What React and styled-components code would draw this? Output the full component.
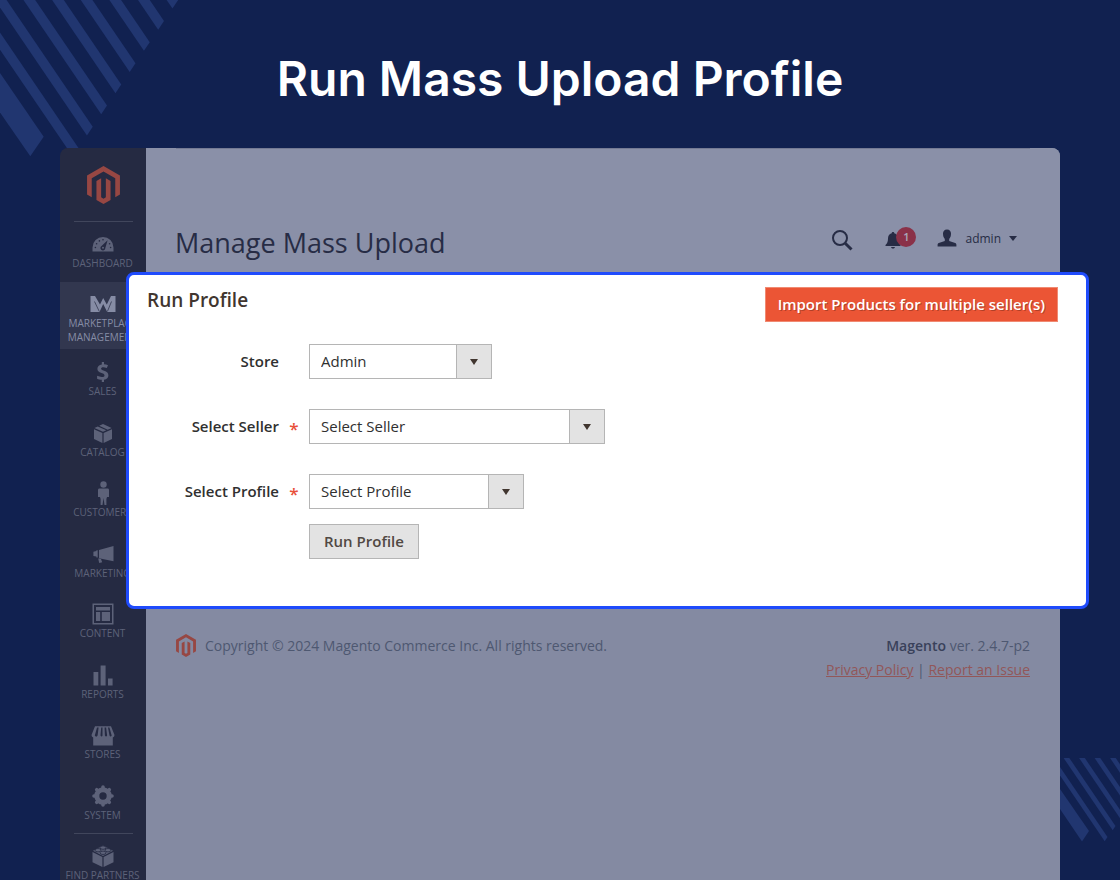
import React, { useState } from "react";
import styled, { createGlobalStyle, css } from "styled-components";

const COLOR = {
  NAVY: "#112150",
  STRIPE: "#213670",
  SIDEBAR: "#252a42",
  SIDEBAR_ACTIVE: "#32374f",
  SIDEBAR_TEXT: "#5d6279",
  SIDEBAR_LIGHT: "#868ca5",
  HEADER: "#8a90a8",
  HEADER_LINE: "#747a94",
  FOOTER: "#848aa2",
  INK: "#272c45",
  FOOT_TEXT: "#4e5871",
  LINK: "#925759",
  LOGO: "#974743",
  BLUE: "#1f4bfc",
  ORANGE: "#eb5535",
  TEXT: "#303030",
  GRAY: "#e3e3e3",
  LINE: "#b5b5b5",
};

const stripes = [-1, 0, 1, 2, 3, 4, 5, 6];

const TopStripes = () => (
  <TopPattern width="180" height="160" viewBox="0 0 180 160" fill={COLOR.STRIPE} aria-hidden="true">
    {stripes.map((i) => {
      const x = 164 - 14.25 * i;
      const y = 21 + 21.15 * i;
      return <polygon key={i} points={`${x},${y} ${x - 5.8},${y + 8.7} ${x - 141.8},${y - 191.3} ${x - 136},${y - 200}`} />;
    })}
    <polygon points="0,73 43.7,136.7 30.3,156.3 0,112.5" />
  </TopPattern>
);

const BottomStripes = () => (
  <BottomPattern width="60" height="84" viewBox="0 0 60 84" fill={COLOR.STRIPE} aria-hidden="true">
    {[0, 1, 2, 3, 4].map((i) => {
      const x = 47.5 + 8 * i;
      const y = 79 - 11 * i;
      return <polygon key={i} points={`${x},${y} ${x - 2.8},${y + 4.2} ${x - 87.8},${y - 120.8} ${x - 82},${y - 120.8}`} />;
    })}
    <polygon points="0,31 29,73 22,83.5 0,51" />
  </BottomPattern>
);

const MagentoLogo = ({ width, height }) => (
  <svg width={width} height={height} viewBox="1.6 0 20.8 24" fill={COLOR.LOGO} aria-hidden="true">
    <path d="M12 24l-4.455-2.572v-12l2.97-1.715v12.001l1.485.902 1.485-.902V7.713l2.971 1.715v12L12 24zM22.391 6v12l-2.969 1.714V7.713L12 3.43 4.574 7.713v12.001L1.609 18V6L12 0l10.391 6z" />
  </svg>
);

const Icon = ({ children, w = 24, h = 24 }) => (
  <svg width={w} height={h} viewBox={`0 0 ${w} ${h}`} fill="currentColor" aria-hidden="true">
    {children}
  </svg>
);

const icons = {
  dashboard: (
    <Icon>
      <path d="M1.5 19.5v-4a10.5 10.5 0 0 1 21 0v4z" />
      <g fill={COLOR.SIDEBAR}>
        <circle cx="4.4" cy="15.5" r=".8" />
        <circle cx="5.6" cy="11.7" r=".8" />
        <circle cx="8.4" cy="8.9" r=".8" />
        <circle cx="12" cy="7.8" r=".8" />
        <circle cx="18.6" cy="11.7" r=".8" />
        <circle cx="19.6" cy="15.5" r=".8" />
        <path d="M16.6 8.2l-2.2 7.6a2.5 2.5 0 1 1-3.6-2.1z" />
      </g>
      <circle cx="12" cy="15.8" r="1" />
    </Icon>
  ),
  market: (
    <Icon w={26}>
      <path d="M.5 4H5l5 8.500L13.200 6l3.600 6.500L21 4h4.500v16h-8.300L13.200 12 9.500 20H.5z" />
      <path d="M4.500 9.500L9.300 19.500M21.500 9.500L17.400 19.500" stroke={COLOR.SIDEBAR_ACTIVE} strokeWidth=".8" />
    </Icon>
  ),
  sales: (
    <Icon>
      <path d="M10.8 2h2.2v2.2c1.5.1 2.8.5 4 1.1l-1.2 2.8c-1.3-.6-2.5-.9-3.5-.9-1.5 0-2.2.6-2.2 1.4 0 1 .9 1.4 3 2.2 2.9 1 4.3 2.3 4.3 4.6 0 2.2-1.6 3.9-4.4 4.3V22h-2.2v-2.2c-1.9 0-3.5-.4-4.7-1v-3c1.5.7 3.2 1.2 4.7 1.2 1.8 0 2.7-.6 2.7-1.6s-.8-1.5-3-2.300c-2.900-1-4.100-2.400-4.100-4.400 0-2.300 1.600-3.900 4.400-4.300z" />
    </Icon>
  ),
  catalog: (
    <Icon>
      <path d="M3 8.300l8.400 3.700v10L3 18.100zM21 8.300L12.600 12v10l8.400-3.900z" />
      <path d="M3.400 7.100l3.400-1.600 8.500 3.700-3.300 1.600zM8.200 4.800L12 3l8.600 4.100-3.900 1.600z" />
    </Icon>
  ),
  customers: (
    <Icon>
      <ellipse cx="12.5" cy="3.5" rx="3.200" ry="3.300" />
      <path d="M8.500 7.500h8c1 0 1.500.6 1.500 1.500V16h-2l-.6 2v6h-1.900l-1-7-1 7H9.600v-6L9 16H7V9c0-.9.500-1.500 1.500-1.500z" />
    </Icon>
  ),
  marketing: (
    <Icon>
      <path d="M22.500 4v15.200L8 16.300V8zM6.700 8.300v7.300H5.400v-1.200l-3-.5V9.700l3-.6v-.8zM7.200 16.500l2.800.6 1.200 3.200-3 .8z" />
    </Icon>
  ),
  content: (
    <Icon>
      <path d="M1.500 1.500h21v21h-21zM3 3v18h18V3z" fillRule="evenodd" />
      <path d="M5 5h14v3.500H5zM5 10h4.200v9H5zM10.800 10H19v9h-8.200z" />
    </Icon>
  ),
  reports: (
    <Icon>
      <path d="M2.500 9h4.800v13.500H2.500zM9.600 2.500h5v20h-5zM17 15.500h4.600v7H17z" />
    </Icon>
  ),
  stores: (
    <Icon>
      <path d="M4 3.300h16L23.500 12a2.600 2.600 0 0 1-1.700 2.500v8H2.200v-8A2.600 2.600 0 0 1 .5 12z" />
      <path d="M6 4.500L3.800 12.500c.8 1.500 2 1.500 2.800 0L7.600 4.500zM10.200 4.500l-.7 8c.8 1.500 1.700 1.300 2 0v-8zM13.600 4.500l.3 8c.6 1.300 1.800 1.300 2.200 0l-1-8zM17 4.500l1.500 8c.6 1.300 1.600 1.300 2.200 0L18.400 4.500z" fill={COLOR.SIDEBAR} />
    </Icon>
  ),
  system: (
    <Icon>
      <circle cx="12" cy="12" r="6.200" fill="none" stroke="currentColor" strokeWidth="5" />
      <g stroke="currentColor" strokeWidth="3.600" strokeLinecap="round">
        <path d="M12 3v2M12 19v2M3 12h2M19 12h2M5.700 5.700l1.400 1.400M16.900 16.900l1.400 1.400M5.700 18.300l1.400-1.400M16.900 7.100l1.400-1.400" />
      </g>
    </Icon>
  ),
  partners: (
    <Icon>
      <path d="M1.500 8l9.900 5v10l-9.900-4.800zM22.500 8l-9.900 5v10l9.900-4.800z" />
      <path d="M12 1.500L22 6.700 12 11.900 2 6.700z" />
      <g stroke={COLOR.SIDEBAR} strokeWidth=".8" fill={COLOR.SIDEBAR_TEXT}>
        <ellipse cx="12" cy="3.600" rx="3" ry="1.700" />
        <ellipse cx="7" cy="6.200" rx="3" ry="1.700" />
        <ellipse cx="17" cy="6.200" rx="3" ry="1.700" />
        <ellipse cx="12" cy="8.800" rx="3" ry="1.700" />
      </g>
    </Icon>
  ),
};

const menuTop = [
  { label: "Dashboard", icon: "dashboard" },
  { label: "Marketplace Management", icon: "market", active: true },
];

const menuMain = [
  { label: "Sales", icon: "sales" },
  { label: "Catalog", icon: "catalog" },
  { label: "Customers", icon: "customers" },
  { label: "Marketing", icon: "marketing" },
  { label: "Content", icon: "content" },
  { label: "Reports", icon: "reports" },
  { label: "Stores", icon: "stores" },
  { label: "System", icon: "system" },
];

const MenuLink = ({ item }) => (
  <MenuItem href="#" $active={item.active}>
    {icons[item.icon]}
    <span>{item.label}</span>
  </MenuItem>
);

const SelectField = ({ id, label, options, width, required }) => {
  const [value, setValue] = useState(options[0]);
  return (
    <>
      <Label htmlFor={id}>{label}</Label>
      <Required>{required ? "*" : ""}</Required>
      <SelectBox $width={width}>
        <Select id={id} value={value} onChange={(e) => setValue(e.target.value)}>
          {options.map((option) => (
            <option key={option}>{option}</option>
          ))}
        </Select>
      </SelectBox>
    </>
  );
};

export default function App() {
  return (
    <Page>
      <GlobalStyle />
      <TopStripes />
      <BottomStripes />
      <Title>Run Mass Upload Profile</Title>
      <Window>
        <Sidebar>
          <LogoLink href="#" aria-label="Magento">
            <MagentoLogo width={33} height={38} />
          </LogoLink>
          <Divider />
          {menuTop.map((item) => (
            <MenuLink key={item.label} item={item} />
          ))}
          <MenuGroup>
            {menuMain.map((item) => (
              <MenuLink key={item.label} item={item} />
            ))}
          </MenuGroup>
          <Divider />
          <MenuLink item={{ label: "Find Partners", icon: "partners" }} />
        </Sidebar>
        <Main>
          <Header>
            <Heading>Manage Mass Upload</Heading>
            <Tools>
              <ToolButton aria-label="Search">
                <Icon w={22} h={22}>
                  <circle cx="9" cy="9" r="7" fill="none" stroke="currentColor" strokeWidth="2" />
                  <path d="M14.200 14.200L20.500 20.500" stroke="currentColor" strokeWidth="3" />
                </Icon>
              </ToolButton>
              <ToolButton aria-label="Notifications">
                <Icon w={16} h={18}>
                  <path d="M8 1c.8 0 1.300.5 1.300 1.200C12 3 13 5 13 7.500c0 3 .7 5 2.500 6.500v1H.5v-1C2.300 12.500 3 10.500 3 7.500 3 5 4 3 6.700 2.200 6.700 1.500 7.200 1 8 1zM6 16h4c-.4 1.200-1.100 1.600-2 1.600S6.400 17.200 6 16z" />
                </Icon>
                <Badge>1</Badge>
              </ToolButton>
              <UserButton>
                <Icon w={20} h={18}>
                  <path d="M10 .5c2.700 0 4 1.700 4 4 0 2.500-.6 4-1.800 5.500v2l6 2c.8.300 1.200 1 1.200 1.800V17.500H.6v-1.700c0-.8.400-1.500 1.200-1.800l6-2v-2C6.600 8.500 6 7 6 4.500c0-2.300 1.300-4 4-4z" />
                </Icon>
                admin
                <Caret />
              </UserButton>
            </Tools>
          </Header>
          <Footer>
            <Copyright>
              <MagentoLogo width={20} height={23} />
              Copyright © 2024 Magento Commerce Inc. All rights reserved.
            </Copyright>
            <Version>
              <div>
                <b>Magento</b> ver. 2.4.7-p2
              </div>
              <div>
                <FootLink href="#">Privacy Policy</FootLink> | <FootLink href="#">Report an Issue</FootLink>
              </div>
            </Version>
          </Footer>
        </Main>
        <Panel>
          <PanelHead>
            <PanelTitle>Run Profile</PanelTitle>
            <ImportButton type="button">Import Products for multiple seller(s)</ImportButton>
          </PanelHead>
          <Form onSubmit={(e) => e.preventDefault()}>
            <SelectField id="store" label="Store" options={["Admin"]} width={183} />
            <SelectField id="seller" label="Select Seller" options={["Select Seller"]} width={296} required />
            <SelectField id="profile" label="Select Profile" options={["Select Profile"]} width={215} required />
            <RunButton type="submit">Run Profile</RunButton>
          </Form>
        </Panel>
      </Window>
    </Page>
  );
}

const GlobalStyle = createGlobalStyle`
  * {
    box-sizing: border-box;
  }
  body {
    margin: 0;
    background: ${COLOR.NAVY};
    font-family: "Open Sans", "Noto Sans", sans-serif;
  }
  button, select {
    font-family: inherit;
  }
`;

const Page = styled.div`
  position: relative;
  display: flex;
  flex-direction: column;
  height: 100vh;
  padding: 0 60px;
  overflow: hidden;
  background: ${COLOR.NAVY};
`;

const TopPattern = styled.svg`
  position: absolute;
  top: 0;
  left: 0;
`;

const BottomPattern = styled.svg`
  position: absolute;
  right: 0;
  bottom: 38px;
`;

const Title = styled.h1`
  position: relative;
  margin: 0;
  padding: 44px 0 34px;
  font-family: Inter, sans-serif;
  font-size: 48px;
  font-weight: 600;
  line-height: 70px;
  text-align: center;
  color: #ffffff;
`;

const Window = styled.div`
  position: relative;
  display: flex;
  flex: 1;
`;

const Sidebar = styled.nav`
  display: flex;
  flex-direction: column;
  flex-shrink: 0;
  width: 86px;
  border-top-left-radius: 8px;
  background: ${COLOR.SIDEBAR};
`;

const LogoLink = styled.a`
  display: flex;
  justify-content: center;
  align-items: center;
  height: 73px;
`;

const Divider = styled.hr`
  width: 59px;
  height: 1px;
  margin: 0 auto;
  border: 0;
  background: #41465c;
`;

const MenuItem = styled.a`
  display: flex;
  flex-direction: column;
  align-items: center;
  height: 60px;
  padding: 10px 1px 0 0;
  font-size: 10px;
  line-height: 14px;
  text-align: center;
  text-transform: uppercase;
  text-decoration: none;
  white-space: nowrap;
  color: ${COLOR.SIDEBAR_TEXT};

  ${({ $active }) =>
    $active &&
    css`
      height: 67px;
      white-space: normal;
      color: ${COLOR.SIDEBAR_LIGHT};
      background: ${COLOR.SIDEBAR_ACTIVE};
    `}
`;

const MenuGroup = styled.div`
  display: flex;
  flex-direction: column;
  padding-top: 1px;

  ${MenuItem}:nth-child(odd) {
    height: 61px;
  }
  ${MenuItem}:last-child {
    height: 59px;
  }
`;

const Main = styled.div`
  display: flex;
  flex-direction: column;
  flex: 1;
  overflow: hidden;
  border-top-right-radius: 8px;
  background: ${COLOR.FOOTER};
`;

const Header = styled.header`
  display: flex;
  justify-content: space-between;
  align-items: flex-start;
  height: 300px;
  padding: 70px 43px 0 29px;
  background: linear-gradient(${COLOR.HEADER_LINE}, ${COLOR.HEADER_LINE}) top / calc(100% - 60px) 1px no-repeat
    ${COLOR.HEADER};
`;

const Heading = styled.h2`
  margin: 0;
  font-size: 27px;
  font-weight: 400;
  line-height: 50px;
  color: ${COLOR.INK};
`;

const Tools = styled.div`
  display: flex;
  align-items: center;
  height: 40px;
`;

const ToolButton = styled.button`
  position: relative;
  display: flex;
  margin-right: 32px;
  padding: 4px 0 0;
  border: 0;
  background: none;
  color: ${COLOR.INK};
`;

const Badge = styled.span`
  position: absolute;
  top: 0;
  left: 11px;
  width: 20px;
  height: 20px;
  border-radius: 10px;
  background: #8a3148;
  font-size: 11px;
  font-weight: 600;
  line-height: 20px;
  text-align: center;
  color: #a9a6b8;
`;

const UserButton = styled.button`
  display: flex;
  align-items: center;
  gap: 8px;
  margin-left: 4px;
  padding: 0;
  border: 0;
  background: none;
  font-size: 12px;
  color: ${COLOR.INK};
`;

const Caret = styled.span`
  border: 4px solid transparent;
  border-top: 5px solid ${COLOR.INK};
  border-bottom: 0;
`;

const Footer = styled.footer`
  display: flex;
  justify-content: space-between;
  padding: 186px 30px 0;
  font-size: 14px;
  line-height: 24px;
  color: ${COLOR.FOOT_TEXT};
`;

const Copyright = styled.div`
  display: flex;
  align-items: flex-start;
  gap: 9px;
`;

const Version = styled.div`
  text-align: right;

  b {
    font-weight: 600;
    color: #39415a;
  }
`;

const FootLink = styled.a`
  color: ${COLOR.LINK};
  text-decoration: underline;
`;

const Panel = styled.section`
  position: absolute;
  top: 124px;
  left: 66px;
  right: -29px;
  height: 337px;
  padding: 12px 28px 0 18px;
  border: 3px solid ${COLOR.BLUE};
  border-radius: 8px;
  background: #ffffff;
  color: ${COLOR.TEXT};
`;

const PanelHead = styled.div`
  display: flex;
  justify-content: space-between;
  align-items: flex-start;
`;

const PanelTitle = styled.h3`
  margin: 0;
  font-size: 19px;
  font-weight: 600;
  line-height: 26px;
  color: #41362f;
`;

const ImportButton = styled.button`
  height: 35px;
  padding: 0 12px 2px;
  border: 1px solid #f08a72;
  background: ${COLOR.ORANGE};
  font-size: 15px;
  font-weight: 600;
  color: #ffffff;
  text-shadow: 1px 1px 0 rgba(0, 0, 0, 0.25);
`;

const Form = styled.form`
  display: grid;
  grid-template-columns: 132px 30px auto;
  grid-auto-rows: 35px;
  row-gap: 30px;
  align-items: center;
  padding-top: 22px;
`;

const Label = styled.label`
  padding-bottom: 2px;
  font-size: 15px;
  font-weight: 600;
  text-align: right;
`;

const Required = styled.span`
  padding-top: 4px;
  font-size: 17px;
  font-weight: 600;
  text-align: center;
  color: #e8503a;
`;

const SelectBox = styled.div`
  position: relative;
  width: ${({ $width }) => $width}px;
  height: 35px;

  &::after {
    content: "";
    position: absolute;
    top: 15px;
    right: 14px;
    border: 4px solid transparent;
    border-top: 6px solid #41362f;
    border-bottom: 0;
    pointer-events: none;
  }
`;

const Select = styled.select`
  appearance: none;
  width: 100%;
  height: 100%;
  padding: 0 46px 2px 11px;
  border: 1px solid ${COLOR.LINE};
  border-radius: 0;
  background: linear-gradient(${COLOR.LINE}, ${COLOR.LINE}) right 34px top / 1px 100% no-repeat,
    linear-gradient(${COLOR.GRAY}, ${COLOR.GRAY}) right / 34px 100% no-repeat #ffffff;
  font-size: 15px;
  color: ${COLOR.TEXT};
`;

const RunButton = styled.button`
  grid-column: 3;
  justify-self: start;
  height: 35px;
  margin-top: -30px;
  padding: 0 14px 2px;
  border: 1px solid ${COLOR.LINE};
  background: ${COLOR.GRAY};
  font-size: 15px;
  font-weight: 600;
  color: #514943;
`;
